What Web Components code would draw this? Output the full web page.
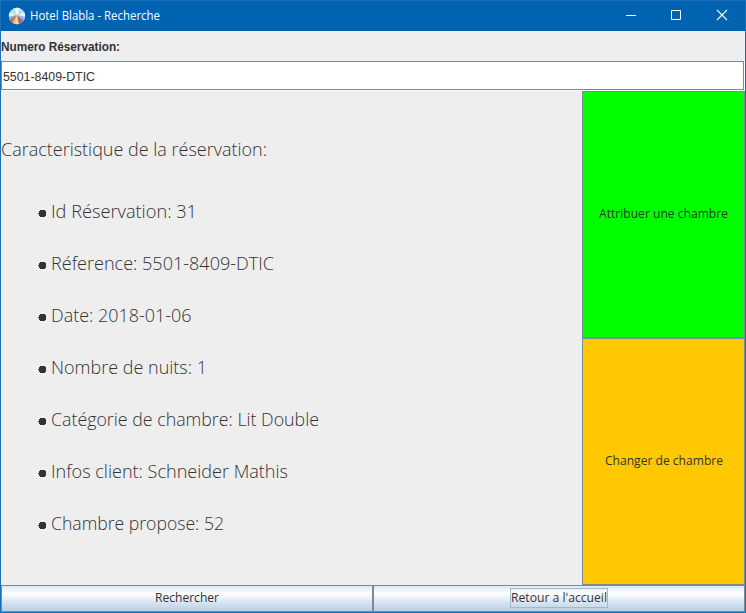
<!DOCTYPE html>
<html lang="fr">
<head>
<meta charset="utf-8">
<title>Hotel Blabla - Recherche</title>
<style>
html, body { margin: 0; height: 100%; }
body { font-family: "Open Sans", "Noto Sans", sans-serif; color: #333; overflow: hidden; }
</style>
</head>
<body>
<hotel-window></hotel-window>
<script>
function define(name, html, init) {
  customElements.define(name, class extends HTMLElement {
    connectedCallback() {
      if (this.shadowRoot) return;
      this.attachShadow({ mode: 'open' }).innerHTML = html;
      if (init) init(this);
    }
  });
}

// A single line of text condensed or widened to the width given by its "w" attribute.
define('fit-text', `
<style>
:host { display: block; white-space: nowrap; flex: none; }
span { display: inline-block; transform-origin: 0 50%; }
</style><span><slot></slot></span>`, el => {
  const w = +el.getAttribute('w');
  el.style.width = w + 'px';
  const span = el.shadowRoot.querySelector('span');
  span.style.transform = 'scaleX(' + w / span.getBoundingClientRect().width + ')';
});

define('title-bar', `
<style>
:host { display: flex; align-items: center; height: 30px; background: #0063b1; color: #fff; font-size: 12px; line-height: 18px; padding-left: 7px; }
.logo { width: 18px; height: 18px; margin-right: 4px; }
.controls { display: flex; margin-left: auto; margin-right: -1px; height: 100%; }
.controls svg { width: 46px; height: 30px; }
</style>
<svg class="logo" viewBox="0 0 18 18">
<defs><clipPath id="c"><circle cx="9" cy="9" r="8.2"/></clipPath></defs>
<g clip-path="url(#c)">
<rect width="18" height="18" fill="#b5dff5"/>
<path d="M9 9L6 0h6z" fill="#f4fafd"/>
<path d="M9 9L0 4v5zM9 9l9-5v5z" fill="#e6f3fa"/>
<path d="M0 9h18v2H0z" fill="#d4e3ee"/>
<path d="M9 8L0 10v5z" fill="#8fa9c9"/>
<path d="M9 8L0 14v4h4z" fill="#cc6a70"/>
<path d="M9 8L3 18h5z" fill="#e8c75c"/>
<path d="M9 8L7 18h5z" fill="#f8dc86"/>
<path d="M9 8l2 10h5z" fill="#dc4a52"/>
<path d="M9 8l5 10 4-3z" fill="#8a70ac"/>
<path d="M9 8l9 8v-6z" fill="#9bb9de"/>
</g></svg>
<slot></slot>
<div class="controls">
<svg viewBox="0 0 46 30"><path d="M18 14.500h10" stroke="#fff"/></svg>
<svg viewBox="0 0 46 30"><path d="M17.500 9.500h9v9h-9z" fill="none" stroke="#fff"/></svg>
<svg viewBox="0 0 46 30"><path d="M17 9l10 10M27 9L17 19" stroke="#fff" stroke-width="1.100"/></svg>
</div>`);

define('search-field', `
<style>
:host { display: block; font-family: "Liberation Sans", Arial, sans-serif; font-size: 12px; }
.label { height: 30px; display: flex; align-items: center; font-weight: bold; padding-top: 1px; box-sizing: border-box; }
.frame { height: 30px; box-sizing: border-box; background: #fff; padding: 0 1px 1px 0; }
.box { height: 29px; box-sizing: border-box; border: 1px solid #7a8a99; display: flex; align-items: center; padding: 2px 0 0 1px; }
</style>
<div class="label"><slot name="label"></slot></div>
<div class="frame"><div class="box"><slot></slot></div></div>`);

define('booking-item', `
<style>
:host { display: flex; align-items: center; height: 52px; }
svg { width: 8px; height: 7px; margin: 5px 5px 0 37px; }
</style><svg viewBox="0 0 8 7"><path d="M2 0h5v1h1v5H7v1H2V6H1V4H0V3h1V1h1z" fill="#333" shape-rendering="crispEdges"/></svg><slot></slot>`);

define('booking-details', `
<style>
:host { display: block; flex: 1; background: #eee; font-size: 18px; font-weight: 330; line-height: 26px; padding-top: 45px; }
.list { padding-top: 23px; }
</style>
<slot name="heading"></slot>
<div class="list"><slot></slot></div>`);

define('swing-button', `
<style>
:host { flex: 1; display: flex; align-items: center; justify-content: center; box-sizing: border-box; border: 1px solid #7a8a99; font-size: 12px; line-height: 18px;
  background: var(--fill, linear-gradient(#dde8f3, #fff 30%, #dde8f3 60%, #b8cfe5)); }
.focus { border: 1px solid transparent; height: 18px; display: flex; align-items: center; }
:host([focused]) .focus { border-color: #a3b8cc; }
</style><div class="focus"><slot></slot></div>`);

define('hotel-window', `
<style>
:host { display: flex; flex-direction: column; box-sizing: border-box; width: 746px; height: 613px; border: 1px solid #1a6fb5; background: #eee; }
.main { flex: 1; display: flex; min-height: 0; }
.side { width: 163px; display: flex; flex-direction: column; font-weight: 380; }
.side swing-button { padding-bottom: 2px; }
.bottom { height: 27px; display: flex; font-weight: 380; }
.bottom swing-button { padding-bottom: 2px; }
</style>
<title-bar><fit-text w="130">Hotel Blabla - Recherche</fit-text></title-bar>
<search-field><fit-text slot="label" w="119">Numero Réservation:</fit-text><fit-text w="92">5501-8409-DTIC</fit-text></search-field>
<div class="main">
<booking-details>
<fit-text slot="heading" w="266">Caracteristique de la réservation:</fit-text>
<booking-item><fit-text w="146">Id Réservation: 31</fit-text></booking-item>
<booking-item><fit-text w="223">Réference: 5501-8409-DTIC</fit-text></booking-item>
<booking-item><fit-text w="140.500">Date: 2018-01-06</fit-text></booking-item>
<booking-item><fit-text w="156">Nombre de nuits: 1</fit-text></booking-item>
<booking-item><fit-text w="268">Catégorie de chambre: Lit Double</fit-text></booking-item>
<booking-item><fit-text w="237">Infos client: Schneider Mathis</fit-text></booking-item>
<booking-item><fit-text w="173">Chambre propose: 52</fit-text></booking-item>
</booking-details>
<div class="side">
<swing-button style="--fill:#0f0"><fit-text w="129">Attribuer une chambre</fit-text></swing-button>
<swing-button style="--fill:#ffc800"><fit-text w="118">Changer de chambre</fit-text></swing-button>
</div>
</div>
<div class="bottom">
<swing-button><fit-text w="64">Rechercher</fit-text></swing-button>
<swing-button focused><fit-text w="96">Retour a l'accueil</fit-text></swing-button>
</div>`);
</script>
</body>
</html>
